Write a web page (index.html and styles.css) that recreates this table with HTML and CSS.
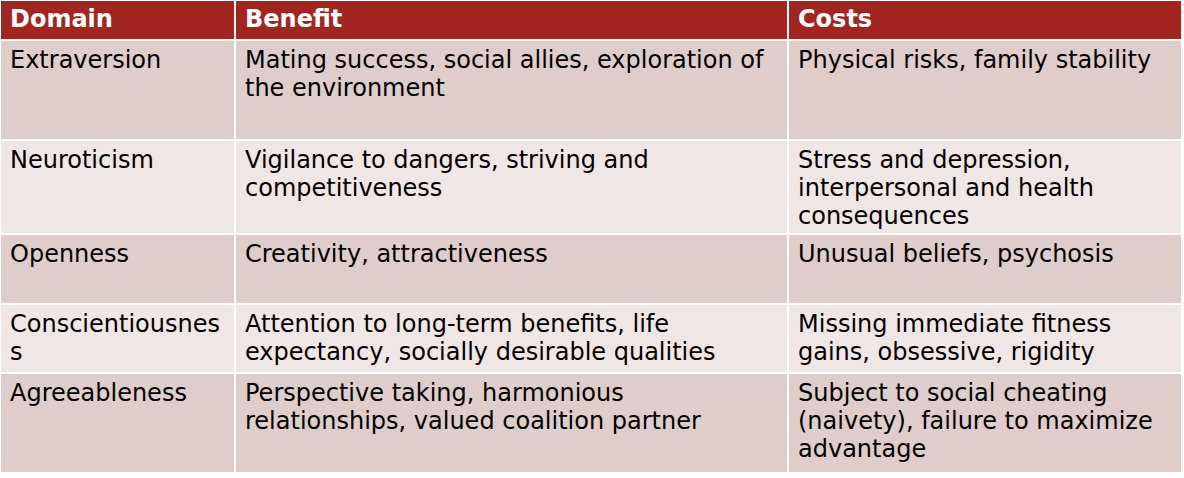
FILE: index.html
```html
<!DOCTYPE html>
<html>
<head>
<meta charset="utf-8">
<link rel="stylesheet" href="styles.css">
</head>
<body>
<table class="grid">
  <colgroup>
    <col class="c1"><col class="c2"><col class="c3">
  </colgroup>
  <thead>
    <tr class="head"><th>Domain</th><th>Benefit</th><th>Costs</th></tr>
  </thead>
  <tbody>
    <tr class="odd r1"><td>Extraversion</td><td>Mating success, social allies, exploration of the environment</td><td>Physical risks, family stability</td></tr>
    <tr class="even r2"><td>Neuroticism</td><td>Vigilance to dangers, striving and competitiveness</td><td>Stress and depression, interpersonal and health consequences</td></tr>
    <tr class="odd r3"><td>Openness</td><td>Creativity, attractiveness</td><td>Unusual beliefs, psychosis</td></tr>
    <tr class="even r4"><td>Conscientiousnes<br>s</td><td>Attention to long-term benefits, life expectancy, socially desirable qualities</td><td>Missing immediate fitness gains, obsessive, rigidity</td></tr>
    <tr class="odd r5"><td>Agreeableness</td><td>Perspective taking, harmonious relationships, valued coalition partner</td><td>Subject to social cheating (naivety), failure to maximize advantage</td></tr>
  </tbody>
</table>
</body>
</html>
```
FILE: styles.css
```css
html, body {
  margin: 0;
  padding: 0;
  background: #ffffff;
}
body {
  font-family: "DejaVu Sans", sans-serif;
  font-size: 24px;
  line-height: 28px;
  color: #000;
}
.grid {
  border-collapse: separate;
  border-spacing: 0;
  table-layout: fixed;
  width: 1182px;
}
.c1 { width: 235px; }
.c2 { width: 553px; }
.c3 { width: 394px; }
.grid th, .grid td {
  border: 1px solid #ffffff;
  padding: 5px 9px 0 9px;
  vertical-align: top;
  text-align: left;
  box-sizing: border-box;
}
.grid th {
  padding-top: 4px;
  font-weight: bold;
  color: #ffffff;
  background: #a2261f;
}
.head { height: 40px; }
.odd td { background: #dfcdcc; }
.even td { background: #efe6e6; }
.r1 { height: 100px; }
.r2 { height: 94px; }
.r3 { height: 70px; }
.r4 { height: 69px; }
.r5 { height: 100px; }
```
